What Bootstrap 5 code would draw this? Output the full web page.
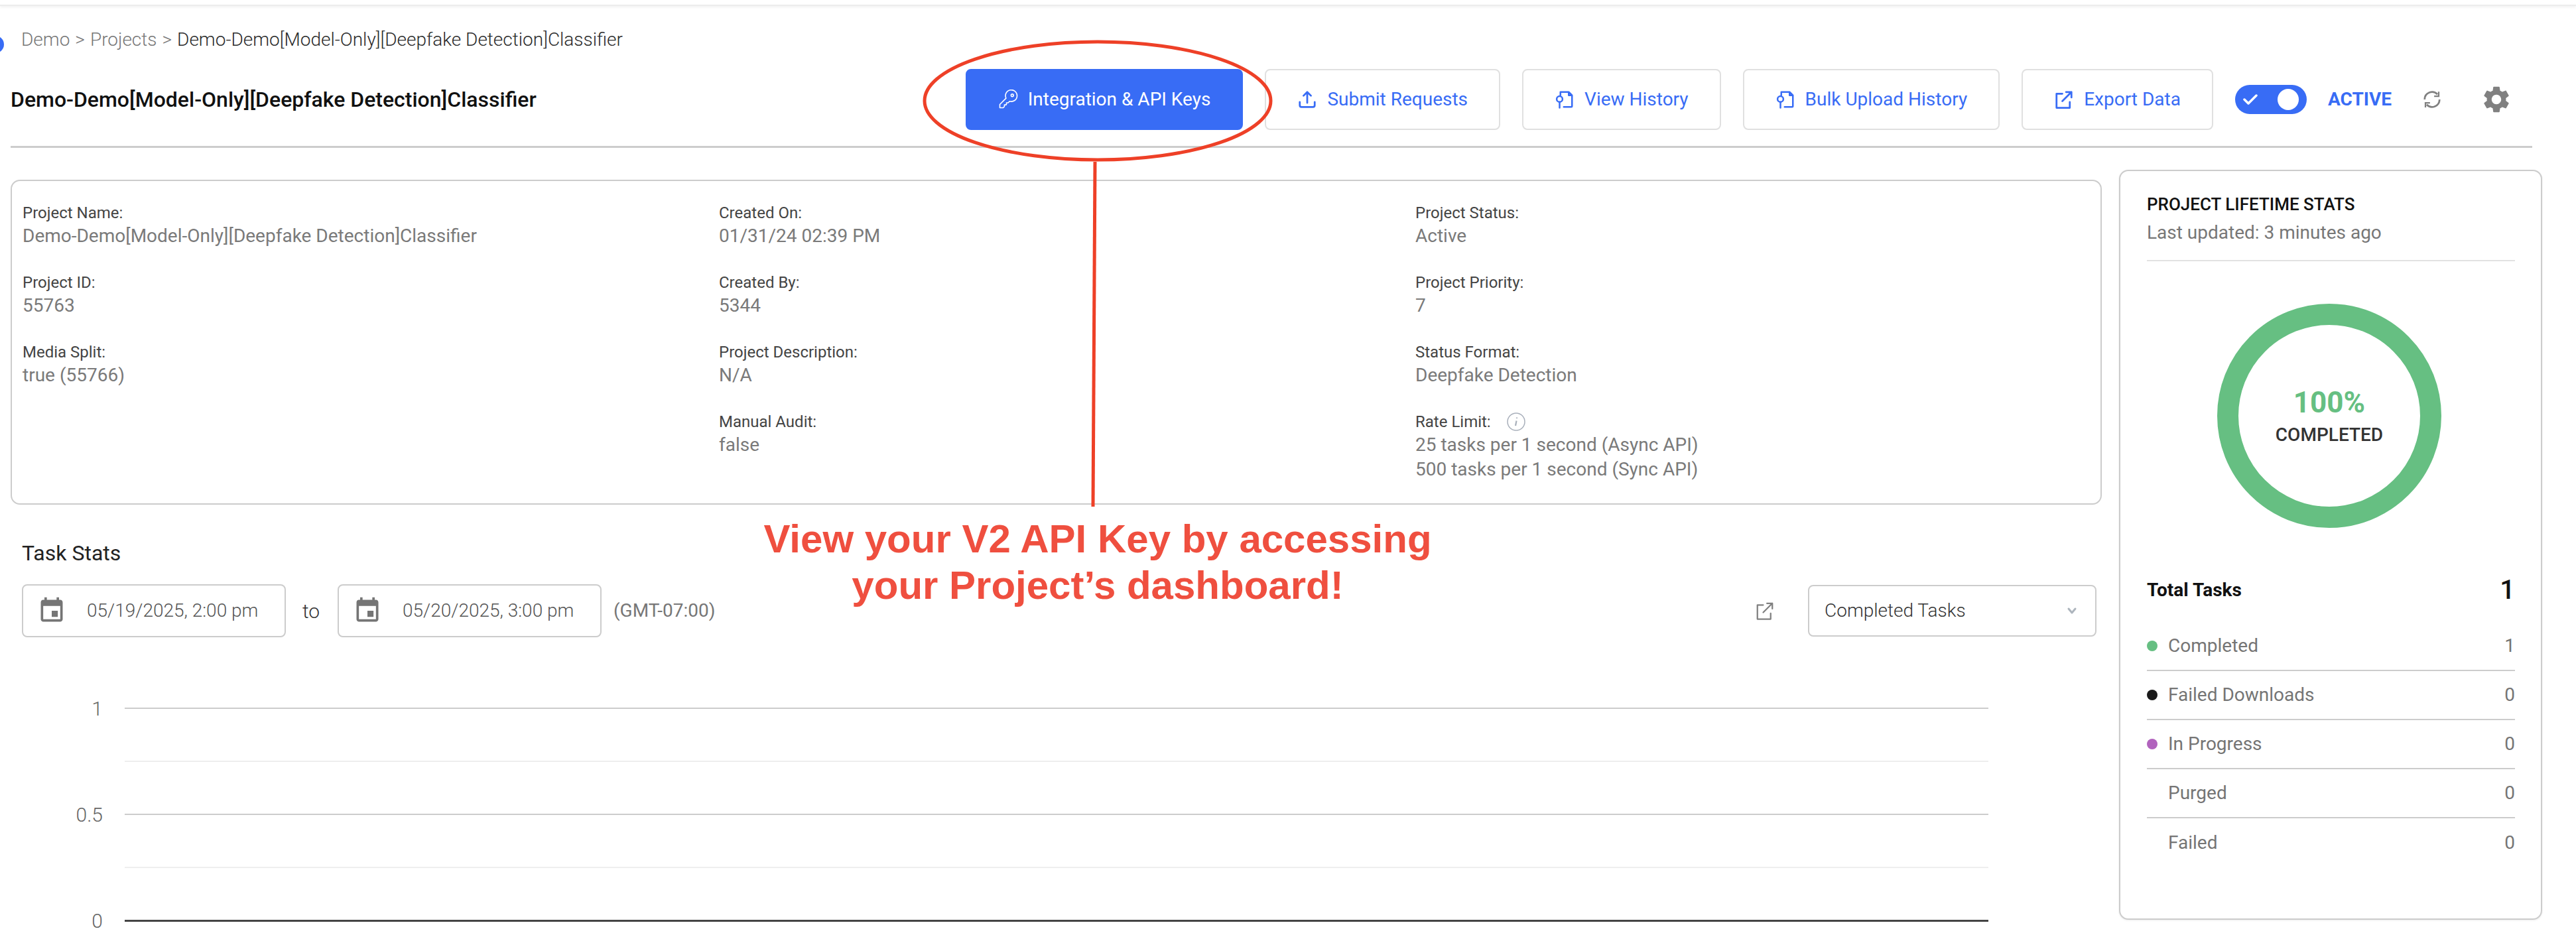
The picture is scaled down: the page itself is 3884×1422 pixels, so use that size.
<!DOCTYPE html>
<html>
<head>
    <title>Project</title>
    <link href="https://cdn.jsdelivr.net/npm/bootstrap@5.3.0/dist/css/bootstrap.min.css" rel="stylesheet">
    <style>
        body {
            font-family: Roboto, "Liberation Sans", sans-serif;
            background-color: #fff;
            color: #1b1b1b;
            width: 3884px;
            height: 1422px;
            overflow: hidden;
            position: relative;
        }

        .top-strip {
            height: 9px;
            border-bottom: 2px solid #ececec;
            box-shadow: 0 2px 4px rgba(0, 0, 0, 0.06);
        }

        .side-dot {
            position: absolute;
            left: -20px;
            top: 54px;
            width: 26px;
            height: 26px;
            border-radius: 50%;
            background-color: #386cf5;
        }

        .crumbs {
            --bs-breadcrumb-divider: ">";
            --bs-breadcrumb-margin-bottom: 0;
            --bs-breadcrumb-item-padding-x: 8px;
            --bs-breadcrumb-divider-color: #777;
            --bs-breadcrumb-item-active-color: #2b2b2b;
            font-size: 28px;
            font-weight: 300;
            line-height: 40px;
            margin: 31px 0 0 32px;
        }

        .crumbs a {
            color: #777;
            text-decoration: none;
        }

        .title-row {
            margin: 24px 96px 0 16px;
            height: 92px;
        }

        .page-title {
            font-size: 32px;
            font-weight: 500;
            color: #111;
            margin: 0 auto 0 0;
        }

        .act-btn {
            --bs-btn-color: #386cf5;
            --bs-btn-border-color: #e0e0e0;
            --bs-btn-hover-color: #386cf5;
            --bs-btn-hover-bg: #f5f8ff;
            --bs-btn-hover-border-color: #e0e0e0;
            height: 92px;
            padding: 0 47px;
            font-size: 28px;
            border-width: 2px;
            border-radius: 8px;
            gap: 15px;
            margin-right: 33px;
        }

        .act-btn.is-main {
            --bs-btn-color: #fff;
            --bs-btn-bg: #386cf5;
            --bs-btn-border-color: #386cf5;
            --bs-btn-hover-color: #fff;
            --bs-btn-hover-bg: #386cf5;
            --bs-btn-hover-border-color: #386cf5;
        }

        .act-btn svg {
            width: 30px;
            height: 30px;
        }

        .toggle-pill {
            width: 108px;
            height: 44px;
            border-radius: 22px;
            background-color: #386cf5;
            padding: 0 12px;
        }

        .toggle-knob {
            width: 32px;
            height: 32px;
            border-radius: 50%;
            background-color: #fff;
        }

        .active-label {
            font-size: 28px;
            font-weight: 700;
            color: #386cf5;
            margin: 0 46px 0 32px;
        }

        .sync-icon {
            margin-right: 58px;
        }

        .head-rule {
            height: 3px;
            background-color: #ccc;
            margin: 24px 66px 0 16px;
        }

        .content-wrap {
            margin-left: 16px;
        }

        .main-col {
            width: 3153px;
            margin-top: 48px;
        }

        .info-box {
            height: 490px;
            border: 2px solid #ccc;
            border-radius: 14px;
            padding: 31px 15px 0 16px;
        }

        .info-grid {
            display: grid;
            grid-template-columns: 1050px 1050px 1fr;
        }

        .info-item {
            height: 105px;
        }

        .info-key {
            font-size: 24px;
            line-height: 34px;
            color: #444;
        }

        .info-val {
            font-size: 28px;
            line-height: 35px;
            color: #7a7a7a;
        }

        .info-val.rate-line {
            line-height: 40px;
        }

        .stats-head {
            font-size: 32px;
            line-height: 40px;
            color: #222;
            margin: 53px 0 0 17px;
        }

        .range-row {
            margin: 27px 0 0 17px;
            height: 80px;
        }

        .date-field {
            width: 398px;
            height: 80px;
            border: 2px solid #ccc;
            border-radius: 8px;
            padding-left: 25px;
            font-size: 28px;
            font-weight: 300;
            color: #555;
        }

        .date-field svg {
            width: 44px;
            height: 44px;
            margin: 0 31px 0 -4px;
        }

        .range-to {
            font-size: 30px;
            font-weight: 300;
            width: 78px;
            padding-left: 25px;
            color: #333;
        }

        .tz-note {
            font-size: 28px;
            color: #777;
            margin: 0 auto 0 18px;
        }

        .open-chart {
            width: 30px;
            height: 30px;
            margin-right: 50px;
        }

        .metric-select {
            --bs-form-select-bg-img: url("data:image/svg+xml,%3csvg xmlns='http://www.w3.org/2000/svg' viewBox='0 0 16 16'%3e%3cpath fill='none' stroke='%23adb5bd' stroke-linecap='round' stroke-linejoin='round' stroke-width='3' d='m3 5 5 6 5-6'/%3e%3c/svg%3e");
            width: 435px;
            height: 78px;
            border: 2px solid #ccc;
            border-radius: 8px;
            font-size: 28px;
            font-weight: 300;
            color: #333;
            padding-left: 23px;
            margin-right: 8px;
            background-size: 16px 16px;
            background-position: right 27px center;
        }

        .chart-rows {
            margin-top: 67px;
        }

        .chart-row {
            height: 80px;
        }

        .axis-num {
            width: 139px;
            text-align: right;
            font-size: 30px;
            font-weight: 300;
            color: #666;
        }

        .axis-line {
            width: 2810px;
            height: 2px;
            margin-left: 33px;
            background-color: #ccc;
        }

        .axis-line.is-minor {
            background-color: #eee;
        }

        .axis-line.is-base {
            height: 3px;
            background-color: #444;
        }

        .stats-box {
            width: 638px;
            height: 1131px;
            margin: 33px 0 0 26px;
            border: 2px solid #ccc;
            border-radius: 14px;
            padding: 32px 39px 0 40px;
            box-shadow: 0 1px 3px rgba(0, 0, 0, 0.08);
        }

        .stats-title {
            font-size: 26px;
            font-weight: 500;
            line-height: 36px;
            color: #111;
        }

        .stats-time {
            font-size: 28px;
            line-height: 40px;
            color: #777;
            margin-top: 5px;
            padding-bottom: 21px;
            border-bottom: 2px solid #e2e2e2;
        }

        .donut {
            width: 338px;
            height: 338px;
            margin: 64px 0 0 106px;
            border: 32px solid #66bf82;
            border-radius: 50%;
        }

        .donut-pct {
            font-size: 44px;
            font-weight: 700;
            color: #66bf82;
            line-height: 50px;
        }

        .donut-cap {
            font-size: 28px;
            font-weight: 500;
            color: #333;
            line-height: 34px;
            margin-top: 7px;
        }

        .total-row {
            height: 50px;
            margin-top: 69px;
        }

        .total-key {
            font-size: 28px;
            font-weight: 700;
            color: #111;
        }

        .total-val {
            font-size: 40px;
            font-weight: 500;
            color: #111;
        }

        .stats-box > .tally {
            margin-top: 23px;
            border: 0;
        }

        .tally > .tally-item {
            height: 74px;
            padding: 0;
            font-size: 28px;
            color: #757575;
            border-color: #ccc;
            border-width: 0 0 2px;
        }

        .tally > .tally-item:last-child {
            border-bottom-width: 0;
        }

        .tally-dot {
            width: 16px;
            height: 16px;
            border-radius: 50%;
            margin-right: 16px;
        }

        .call-out {
            position: absolute;
            left: 0;
            top: 0;
            pointer-events: none;
        }

        .call-text {
            position: absolute;
            left: 1055px;
            top: 778px;
            width: 1200px;
            text-align: center;
            font-family: "Liberation Sans", Arial, sans-serif;
            font-size: 60px;
            font-weight: 700;
            line-height: 70px;
            color: #ef4f3f;
        }
    </style>
</head>
<body>
    <div class="top-strip"></div>
    <div class="side-dot"></div>

    <nav>
        <ol class="breadcrumb crumbs">
            <li class="breadcrumb-item"><a href="#">Demo</a></li>
            <li class="breadcrumb-item"><a href="#">Projects</a></li>
            <li class="breadcrumb-item active">Demo-Demo[Model-Only][Deepfake Detection]Classifier</li>
        </ol>
    </nav>

    <div class="d-flex align-items-center title-row">
        <h1 class="page-title">Demo-Demo[Model-Only][Deepfake Detection]Classifier</h1>
        <button class="btn act-btn is-main d-flex align-items-center">
            <svg viewBox="0 0 24 24" fill="none" stroke="currentColor" stroke-width="1.300" stroke-linejoin="round"><path d="M9.500 10.500 2 18v4h4l1.500-1.500v-2h2l.5-.5v-2h2l1.800-1.800A7 7 0 1 0 9.500 10.500z"/><circle cx="17" cy="7" r="1.500"/></svg>
            Integration &amp; API Keys
        </button>
        <button class="btn act-btn d-flex align-items-center">
            <svg viewBox="0 0 24 24" fill="none" stroke="currentColor" stroke-width="2.200" stroke-linecap="round" stroke-linejoin="round"><path d="M12 16V3M7.500 7.500 12 3l4.500 4.500M3 15v4a2 2 0 0 0 2 2h14a2 2 0 0 0 2-2v-4"/></svg>
            Submit Requests
        </button>
        <button class="btn act-btn d-flex align-items-center">
            <svg viewBox="0 0 24 24" fill="none" stroke="currentColor" stroke-width="2" stroke-linecap="round" stroke-linejoin="round"><path d="M7 7V3h10l4 4v13a1 1 0 0 1-1 1h-9M17 3v4h4"/><circle cx="6" cy="11.500" r="3.500"/><path d="M6 15v7"/></svg>
            View History
        </button>
        <button class="btn act-btn d-flex align-items-center">
            <svg viewBox="0 0 24 24" fill="none" stroke="currentColor" stroke-width="2" stroke-linecap="round" stroke-linejoin="round"><path d="M7 7V3h10l4 4v13a1 1 0 0 1-1 1h-9M17 3v4h4"/><circle cx="6" cy="11.500" r="3.500"/><path d="M6 15v7"/></svg>
            Bulk Upload History
        </button>
        <button class="btn act-btn d-flex align-items-center">
            <svg viewBox="0 0 24 24" fill="none" stroke="currentColor" stroke-width="2.200" stroke-linecap="round" stroke-linejoin="round"><path d="M10 5H3v17h16v-7M10 14 21 3M14.500 3H21v6.500"/></svg>
            Export Data
        </button>
        <div class="toggle-pill d-flex align-items-center justify-content-between">
            <svg width="22" height="18" viewBox="0 0 22 18" fill="none" stroke="#fff" stroke-width="3.500" stroke-linecap="round" stroke-linejoin="round"><path d="M2 9l6 6L20 3"/></svg>
            <span class="toggle-knob"></span>
        </div>
        <span class="active-label">ACTIVE</span>
        <svg width="30" height="30" viewBox="0 0 24 24" fill="none" stroke="#808080" stroke-width="2.200" class="sync-icon"><path d="M3 12a9 9 0 0 1 15.500-6.200M21 12a9 9 0 0 1-15.500 6.200"/><path d="M20 2.500V8h-5.500M4 21.500V16h5.500" stroke-width="1.800"/></svg>
        <svg width="48" height="48" viewBox="0 0 24 24" fill="#808080"><path d="M19.140 12.940c.04-.3.06-.61.06-.94 0-.32-.02-.64-.07-.94l2.030-1.580c.18-.14.23-.41.12-.61l-1.920-3.320c-.12-.22-.37-.29-.59-.22l-2.390.96c-.5-.38-1.030-.7-1.620-.94l-.36-2.540c-.04-.24-.24-.41-.48-.41h-3.840c-.24 0-.43.17-.47.41l-.36 2.540c-.59.24-1.130.57-1.620.94l-2.390-.96c-.22-.08-.47 0-.59.22L2.740 8.870c-.12.21-.08.47.12.61l2.030 1.580c-.05.3-.09.63-.09.94s.02.64.07.94l-2.030 1.580c-.18.14-.23.41-.12.61l1.920 3.320c.12.22.37.29.59.22l2.390-.96c.5.38 1.030.7 1.620.94l.36 2.540c.05.24.24.41.48.41h3.840c.24 0 .44-.17.47-.41l.36-2.540c.59-.24 1.130-.56 1.620-.94l2.390.96c.22.08.47 0 .59-.22l1.920-3.320c.12-.22.07-.47-.12-.61l-2.010-1.580zM12 15.600c-1.980 0-3.600-1.620-3.600-3.600s1.620-3.600 3.600-3.600 3.600 1.620 3.600 3.600-1.620 3.600-3.600 3.600z"/></svg>
    </div>
    <div class="head-rule"></div>

    <div class="d-flex align-items-start content-wrap">
        <div class="main-col">
            <div class="info-box">
                <div class="info-grid">
                    <div>
                        <div class="info-item"><div class="info-key">Project Name:</div><div class="info-val">Demo-Demo[Model-Only][Deepfake Detection]Classifier</div></div>
                        <div class="info-item"><div class="info-key">Project ID:</div><div class="info-val">55763</div></div>
                        <div class="info-item"><div class="info-key">Media Split:</div><div class="info-val">true (55766)</div></div>
                    </div>
                    <div>
                        <div class="info-item"><div class="info-key">Created On:</div><div class="info-val">01/31/24 02:39 PM</div></div>
                        <div class="info-item"><div class="info-key">Created By:</div><div class="info-val">5344</div></div>
                        <div class="info-item"><div class="info-key">Project Description:</div><div class="info-val">N/A</div></div>
                        <div class="info-item"><div class="info-key">Manual Audit:</div><div class="info-val">false</div></div>
                    </div>
                    <div>
                        <div class="info-item"><div class="info-key">Project Status:</div><div class="info-val">Active</div></div>
                        <div class="info-item"><div class="info-key">Project Priority:</div><div class="info-val">7</div></div>
                        <div class="info-item"><div class="info-key">Status Format:</div><div class="info-val">Deepfake Detection</div></div>
                        <div class="info-item">
                            <div class="info-key d-flex align-items-center gap-4">Rate Limit:
                                <svg width="28" height="28" viewBox="0 0 28 28" fill="none" stroke="#a9b0bb" stroke-width="1.500"><circle cx="14" cy="14" r="13"/><path d="M14.500 12.500 13 20M15 7.500v1.500" stroke-width="2.200"/></svg>
                            </div>
                            <div class="info-val">25 tasks per 1 second (Async API)</div>
                            <div class="info-val rate-line">500 tasks per 1 second (Sync API)</div>
                        </div>
                    </div>
                </div>
            </div>

            <div class="stats-head">Task Stats</div>
            <div class="d-flex align-items-center range-row">
                <div class="date-field d-flex align-items-center">
                    <svg viewBox="0 0 24 24" fill="#757575"><path d="M17 12h-5v5h5v-5zM16 1v2H8V1H6v2H5c-1.110 0-1.990.9-1.990 2L3 19c0 1.100.89 2 2 2h14c1.100 0 2-.9 2-2V5c0-1.100-.9-2-2-2h-1V1h-2zm3 18H5V8h14v11z"/></svg>
                    05/19/2025, 2:00 pm
                </div>
                <span class="range-to">to</span>
                <div class="date-field d-flex align-items-center">
                    <svg viewBox="0 0 24 24" fill="#757575"><path d="M17 12h-5v5h5v-5zM16 1v2H8V1H6v2H5c-1.110 0-1.990.9-1.990 2L3 19c0 1.100.89 2 2 2h14c1.100 0 2-.9 2-2V5c0-1.100-.9-2-2-2h-1V1h-2zm3 18H5V8h14v11z"/></svg>
                    05/20/2025, 3:00 pm
                </div>
                <span class="tz-note">(GMT-07:00)</span>
                <svg class="open-chart" viewBox="0 0 24 24" fill="none" stroke="#808080" stroke-width="1.800" stroke-linecap="round" stroke-linejoin="round"><path d="M10 5H3v17h16v-7M10 14 21 3M14.500 3H21v6.500"/></svg>
                <select class="form-select metric-select"><option>Completed Tasks</option></select>
            </div>

            <div class="chart-rows">
                <div class="d-flex align-items-center chart-row"><span class="axis-num">1</span><div class="axis-line"></div></div>
                <div class="d-flex align-items-center chart-row"><span class="axis-num"></span><div class="axis-line is-minor"></div></div>
                <div class="d-flex align-items-center chart-row"><span class="axis-num">0.5</span><div class="axis-line"></div></div>
                <div class="d-flex align-items-center chart-row"><span class="axis-num"></span><div class="axis-line is-minor"></div></div>
                <div class="d-flex align-items-center chart-row"><span class="axis-num">0</span><div class="axis-line is-base"></div></div>
            </div>
        </div>

        <div class="card stats-box">
            <div class="stats-title">PROJECT LIFETIME STATS</div>
            <div class="stats-time">Last updated: 3 minutes ago</div>
            <div class="donut d-flex flex-column align-items-center justify-content-center">
                <div class="donut-pct">100%</div>
                <div class="donut-cap">COMPLETED</div>
            </div>
            <div class="d-flex align-items-center justify-content-between total-row">
                <span class="total-key">Total Tasks</span>
                <span class="total-val">1</span>
            </div>
            <ul class="list-group list-group-flush tally">
                <li class="list-group-item tally-item d-flex align-items-center"><span class="tally-dot" style="background-color: #66bf82"></span>Completed<span class="ms-auto">1</span></li>
                <li class="list-group-item tally-item d-flex align-items-center"><span class="tally-dot" style="background-color: #1a1a1a"></span>Failed Downloads<span class="ms-auto">0</span></li>
                <li class="list-group-item tally-item d-flex align-items-center"><span class="tally-dot" style="background-color: #b163bd"></span>In Progress<span class="ms-auto">0</span></li>
                <li class="list-group-item tally-item d-flex align-items-center"><span class="tally-dot"></span>Purged<span class="ms-auto">0</span></li>
                <li class="list-group-item tally-item d-flex align-items-center"><span class="tally-dot"></span>Failed<span class="ms-auto">0</span></li>
            </ul>
        </div>
    </div>

    <svg class="call-out" width="3884" height="1422" fill="none" stroke="#ee4027">
        <ellipse cx="1655" cy="152" rx="261" ry="89" stroke-width="5"/>
        <path d="M1651 244 1648 764" stroke-width="5"/>
    </svg>
    <div class="call-text">View your V2 API Key by accessing<br>your Project’s dashboard!</div>
</body>
</html>
